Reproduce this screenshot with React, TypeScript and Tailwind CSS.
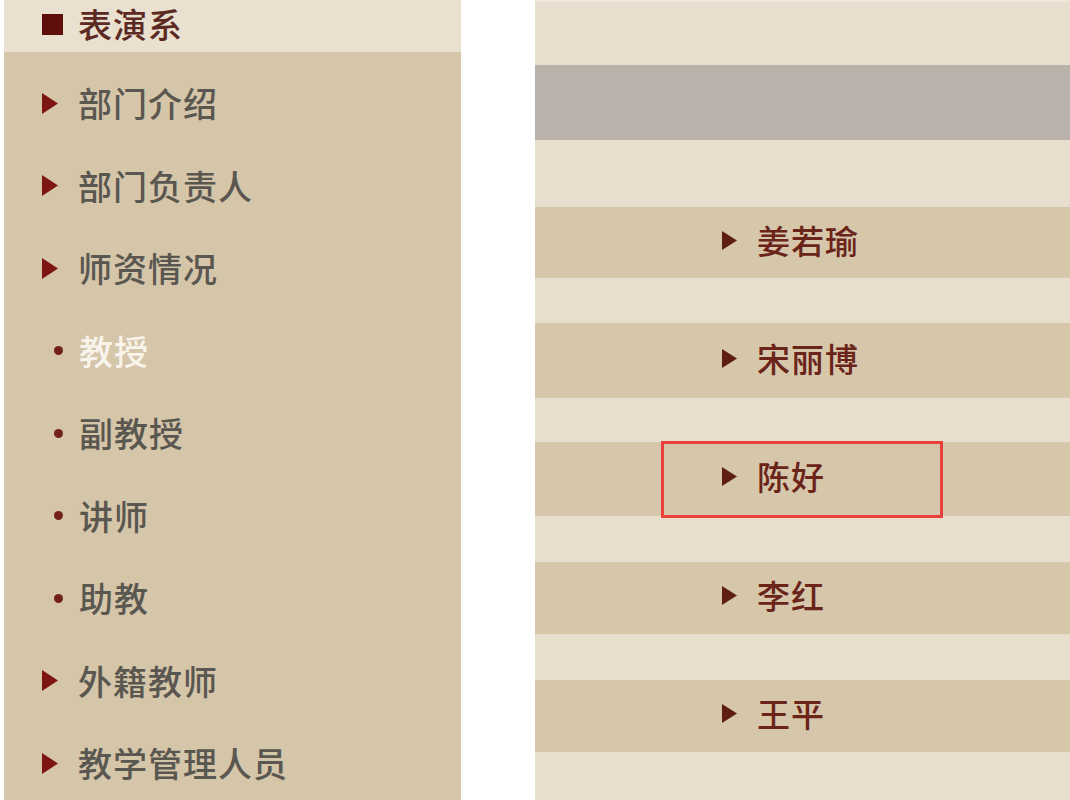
import React from 'react';

type MenuItem = {
  label: string;
  kind: 'main' | 'sub';
  active?: boolean;
};

const menu: MenuItem[] = [
  { label: '部门介绍', kind: 'main' },
  { label: '部门负责人', kind: 'main' },
  { label: '师资情况', kind: 'main' },
  { label: '教授', kind: 'sub', active: true },
  { label: '副教授', kind: 'sub' },
  { label: '讲师', kind: 'sub' },
  { label: '助教', kind: 'sub' },
  { label: '外籍教师', kind: 'main' },
  { label: '教学管理人员', kind: 'main' },
];

type Stripe = {
  h: string;
  tone: 'light' | 'gray' | 'tan';
  name?: string;
  marked?: boolean;
};

const stripes: Stripe[] = [
  { h: 'h-[63px]', tone: 'light' },
  { h: 'h-[75px]', tone: 'gray' },
  { h: 'h-[67px]', tone: 'light' },
  { h: 'h-[71px]', tone: 'tan', name: '姜若瑜' },
  { h: 'h-[45px]', tone: 'light' },
  { h: 'h-[75px]', tone: 'tan', name: '宋丽博' },
  { h: 'h-[44px]', tone: 'light' },
  { h: 'h-[74px]', tone: 'tan', name: '陈好', marked: true },
  { h: 'h-[46px]', tone: 'light' },
  { h: 'h-[72px]', tone: 'tan', name: '李红' },
  { h: 'h-[46px]', tone: 'light' },
  { h: 'h-[72px]', tone: 'tan', name: '王平' },
  { h: 'h-[48px]', tone: 'light' },
];

const toneClass = {
  light: 'bg-[#e7dece]',
  gray: 'bg-[#b9b1aa]',
  tan: 'bg-[#d6c6aa]',
};

function Arrow({ className, w, h }: { className?: string; w: number; h: number }) {
  return (
    <svg width={w} height={h} viewBox={`0 0 ${w} ${h}`} className={className}>
      <polygon points={`0,0 ${w},${h / 2} 0,${h}`} fill="currentColor" />
    </svg>
  );
}

function SideMenu() {
  return (
    <div className="w-[457px] ml-[4px] h-full flex flex-col bg-[#d5c5a9]">
      <div className="h-[52px] bg-[#e9e0d0] flex items-center pl-[38px] shrink-0">
        <span className="w-[21px] h-[21px] bg-[#5e0f0b] mr-[15px] mb-[4px]" />
        <span className="text-[34px] leading-[40px] font-medium text-[#5c2a22] tracking-[1px] mb-[4px]">表演系</span>
      </div>
      <div className="pt-[11px] flex flex-col">
        {menu.map((item) => (
          <div key={item.label} className="h-[82.5px] flex items-center shrink-0">
            {item.kind === 'main' ? (
              <Arrow w={16} h={21} className="ml-[38px] mr-[20px] mb-[2px] text-[#7d1612]" />
            ) : (
              <span className="ml-[50px] mr-[16px] mb-[2px] w-[9px] h-[9px] rounded-full bg-[#74201a]" />
            )}
            <span
              className={
                'text-[34px] leading-none font-medium tracking-[1px] mb-[2px] ' +
                (item.active ? 'text-[#f8f4ec]' : 'text-[#5a5750]')
              }
            >
              {item.label}
            </span>
          </div>
        ))}
      </div>
    </div>
  );
}

function NameList() {
  return (
    <div className="flex-1 h-full flex flex-col border-t-[2px] border-[#eee7da]">
      {stripes.map((s, i) => (
        <div key={i} className={`${s.h} ${toneClass[s.tone]} relative flex items-center shrink-0`}>
          {s.name && (
            <div className="flex items-center pl-[187px] mb-[5px]">
              <Arrow w={15} h={19} className="mr-[20px] text-[#5e1e14]" />
              <span className="text-[33px] leading-none font-medium text-[#6a2419] tracking-[1px]">{s.name}</span>
            </div>
          )}
          {s.marked && (
            <div className="absolute z-10 left-[126px] top-[-1px] w-[282px] h-[77px] border-[3px] border-[#ea3f3a]" />
          )}
        </div>
      ))}
    </div>
  );
}

export default function App() {
  return (
    <div
      className="w-[1070px] h-[800px] bg-white flex overflow-hidden"
      style={{ fontFamily: '"Noto Sans CJK SC", "Noto Sans", sans-serif' }}
    >
      <SideMenu />
      <div className="w-[74px] shrink-0" />
      <NameList />
    </div>
  );
}
